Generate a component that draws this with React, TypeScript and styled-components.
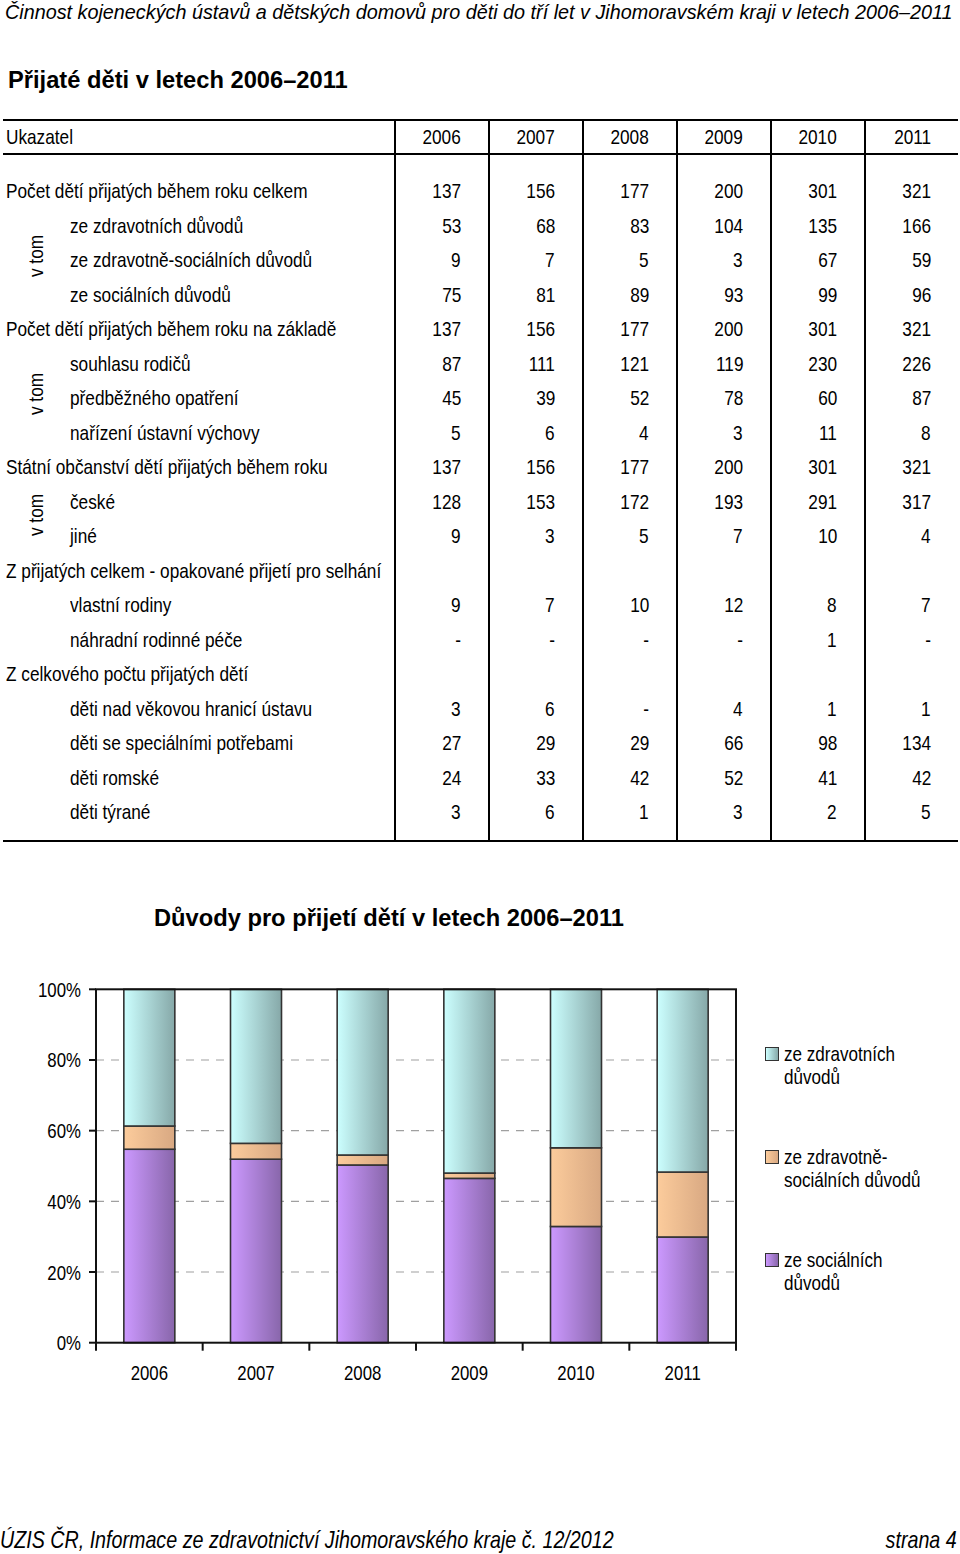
import React from "react";
import styled, { createGlobalStyle } from "styled-components";

const Global = createGlobalStyle`
  html, body { margin: 0; padding: 0; background: #fff; }
  body { width: 960px; color: #000; }
`;

const SANS = `"Liberation Sans", Arial, sans-serif`;
const SQUEEZE = 0.82;

/* Arial Narrow look: Liberation Sans (Arial metrics) condensed horizontally */
const Narrow = styled.span<{ $origin?: "left" | "right" }>`
  display: inline-block;
  white-space: nowrap;
  transform: scaleX(${SQUEEZE});
  transform-origin: ${(p) => p.$origin ?? "left"} center;
`;

const Page = styled.div`
  width: 960px;
  height: 1554px;
  display: flex;
  flex-direction: column;
  overflow: hidden;
`;

const RunningHead = styled.div`
  font-family: ${SANS};
  font-style: italic;
  font-size: 19.8px;
  line-height: 24px;
  padding-left: 5px;
  white-space: nowrap;
`;

const Title = styled.h1`
  margin: 42px 0 0 8px;
  font-family: ${SANS};
  font-weight: bold;
  font-size: 23.7px;
  line-height: 28px;
`;

const Table = styled.div`
  margin: 25px 0 0 3px;
  width: 955px;
  display: grid;
  grid-template-columns: 391px repeat(6, 94px);
  grid-template-rows: 2px 32px 2px 19px repeat(19, 34.5px) 10px 2px;
  font-family: ${SANS};
  font-size: 21px;
  line-height: 24px;
`;

const HRule = styled.div<{ $r: number }>`
  grid-column: 1 / -1;
  grid-row: ${(p) => p.$r};
  background: #000;
`;

const VRule = styled.div<{ $c: number }>`
  grid-column: ${(p) => p.$c};
  grid-row: 1 / -1;
  border-left: 2px solid #000;
`;

const LabelCell = styled.div<{ $r: number; $sub?: boolean }>`
  grid-column: 1;
  grid-row: ${(p) => p.$r};
  display: flex;
  align-items: center;
  padding-left: ${(p) => (p.$sub ? 67 : 3)}px;
  white-space: nowrap;
`;

const NumCell = styled.div<{ $r: number; $c: number }>`
  grid-column: ${(p) => p.$c};
  grid-row: ${(p) => p.$r};
  display: flex;
  align-items: center;
  justify-content: flex-end;
  padding-right: 27px;
`;

const VTom = styled.div<{ $r: string }>`
  grid-column: 1;
  grid-row: ${(p) => p.$r};
  align-self: center;
  justify-self: start;
  margin-left: 7px;
  white-space: nowrap;
  transform: translateY(-4px) rotate(-90deg) scaleX(${SQUEEZE});
`;

const ChartSection = styled.section`
  margin-top: 62px;
  display: flex;
  flex-direction: column;
`;

const ChartTitle = styled.h2`
  margin: 0;
  width: 778px;
  text-align: center;
  font-family: ${SANS};
  font-weight: bold;
  font-size: 23.7px;
  line-height: 28px;
`;

const ChartRow = styled.div`
  margin-top: 43px;
  display: flex;
  align-items: flex-start;
`;

const Legend = styled.ul`
  list-style: none;
  margin: 67px 0 0 15px;
  padding: 0;
  display: flex;
  flex-direction: column;
  gap: 57px;
  font-family: ${SANS};
  font-size: 20.8px;
  line-height: 23px;
`;

const LegendItem = styled.li`
  display: flex;
  gap: 5px;
  align-items: flex-start;
`;

const Swatch = styled.span<{ $from: string; $to: string }>`
  flex: none;
  width: 14px;
  height: 14px;
  margin-top: 5px;
  box-sizing: border-box;
  border: 1.5px solid #333;
  background: linear-gradient(to right, ${(p) => p.$from}, ${(p) => p.$to});
`;

const Footer = styled.footer`
  margin-top: auto;
  display: flex;
  justify-content: space-between;
  padding: 0 3px 1px 0;
  font-family: ${SANS};
  font-style: italic;
  font-size: 24px;
  line-height: 26px;
`;

type Val = number | string;
interface Row {
  label: string;
  sub?: boolean;
  v: Val[];
}

const rows: Row[] = [
  { label: "Počet dětí přijatých během roku celkem", v: [137, 156, 177, 200, 301, 321] },
  { label: "ze zdravotních důvodů", sub: true, v: [53, 68, 83, 104, 135, 166] },
  { label: "ze zdravotně-sociálních důvodů", sub: true, v: [9, 7, 5, 3, 67, 59] },
  { label: "ze sociálních důvodů", sub: true, v: [75, 81, 89, 93, 99, 96] },
  { label: "Počet dětí přijatých během roku na základě", v: [137, 156, 177, 200, 301, 321] },
  { label: "souhlasu rodičů", sub: true, v: [87, 111, 121, 119, 230, 226] },
  { label: "předběžného opatření", sub: true, v: [45, 39, 52, 78, 60, 87] },
  { label: "nařízení ústavní výchovy", sub: true, v: [5, 6, 4, 3, 11, 8] },
  { label: "Státní občanství dětí přijatých během roku", v: [137, 156, 177, 200, 301, 321] },
  { label: "české", sub: true, v: [128, 153, 172, 193, 291, 317] },
  { label: "jiné", sub: true, v: [9, 3, 5, 7, 10, 4] },
  { label: "Z přijatých celkem - opakované přijetí pro selhání", v: [] },
  { label: "vlastní rodiny", sub: true, v: [9, 7, 10, 12, 8, 7] },
  { label: "náhradní rodinné péče", sub: true, v: ["-", "-", "-", "-", 1, "-"] },
  { label: "Z celkového počtu přijatých dětí", v: [] },
  { label: "děti nad věkovou hranicí ústavu", sub: true, v: [3, 6, "-", 4, 1, 1] },
  { label: "děti se speciálními potřebami", sub: true, v: [27, 29, 29, 66, 98, 134] },
  { label: "děti romské", sub: true, v: [24, 33, 42, 52, 41, 42] },
  { label: "děti týrané", sub: true, v: [3, 6, 1, 3, 2, 5] },
];

const years = [2006, 2007, 2008, 2009, 2010, 2011];
const FIRST = 5;
const vTomGroups = [
  [1, 4],
  [5, 8],
  [9, 11],
];

const DataTable = () => (
  <Table>
    {[2, 3, 4, 5, 6, 7].map((c) => (
      <VRule key={`v${c}`} $c={c} />
    ))}
    <LabelCell $r={2}>
      <Narrow>Ukazatel</Narrow>
    </LabelCell>
    {years.map((y, i) => (
      <NumCell key={y} $r={2} $c={i + 2}>
        <Narrow $origin="right">{y}</Narrow>
      </NumCell>
    ))}
    {rows.map((row, ri) => (
      <React.Fragment key={ri}>
        <LabelCell $r={FIRST + ri} $sub={row.sub}>
          <Narrow>{row.label}</Narrow>
        </LabelCell>
        {row.v.map((val, ci) => (
          <NumCell key={ci} $r={FIRST + ri} $c={ci + 2}>
            <Narrow $origin="right">{val}</Narrow>
          </NumCell>
        ))}
      </React.Fragment>
    ))}
    {vTomGroups.map(([a, b]) => (
      <VTom key={a} $r={`${FIRST + a} / ${FIRST + b}`}>
        v tom
      </VTom>
    ))}
    <HRule $r={1} />
    <HRule $r={3} />
    <HRule $r={25} />
  </Table>
);

const series = [
  { key: "soc", from: "#cc99ff", to: "#8866aa", data: [75, 81, 89, 93, 99, 96] },
  { key: "zs", from: "#fccc9c", to: "#d8a882", data: [9, 7, 5, 3, 67, 59] },
  { key: "zdr", from: "#ccffff", to: "#86a8a8", data: [53, 68, 83, 104, 135, 166] },
];

const X0 = 96;
const X1 = 736;
const Y0 = 989.3;
const Y1 = 1342.7;
const CW = (X1 - X0) / 6;
const BW = 51;
const yAt = (p: number) => Y1 - p * (Y1 - Y0);

const NarrowText = ({ x, y, anchor, children }: { x: number; y: number; anchor: "start" | "middle" | "end"; children: React.ReactNode }) => (
  <text transform={`translate(${x} ${y}) scale(${SQUEEZE} 1)`} textAnchor={anchor}>
    {children}
  </text>
);

const Chart = () => (
  <svg width={750} height={420} viewBox="0 975 750 420" fontFamily={SANS} fontSize={20.5} style={{ flex: "none" }}>
    <defs>
      {series.map((s) => (
        <linearGradient key={s.key} id={`g-${s.key}`} x1="0" x2="1" y1="0" y2="0">
          <stop offset="0" stopColor={s.from} />
          <stop offset="1" stopColor={s.to} />
        </linearGradient>
      ))}
    </defs>
    {[0.2, 0.4, 0.6, 0.8].map((p) => (
      <line key={p} x1={X0} x2={X1} y1={yAt(p)} y2={yAt(p)} stroke="#a0a0a0" strokeWidth={1.2} strokeDasharray="8 7" />
    ))}
    {years.map((y, i) => {
      const total = series.reduce((a, s) => a + s.data[i], 0);
      const x = X0 + CW * (i + 0.5) - BW / 2;
      let acc = 0;
      return (
        <g key={y}>
          {series.map((s) => {
            const lo = acc / total;
            acc += s.data[i];
            const hi = acc / total;
            return (
              <rect
                key={s.key}
                x={x}
                y={yAt(hi)}
                width={BW}
                height={yAt(lo) - yAt(hi)}
                fill={`url(#g-${s.key})`}
                stroke="#333"
                strokeWidth={1.6}
              />
            );
          })}
        </g>
      );
    })}
    <rect x={X0} y={Y0} width={X1 - X0} height={Y1 - Y0} fill="none" stroke="#111" strokeWidth={2} />
    {[0, 0.2, 0.4, 0.6, 0.8, 1].map((p) => (
      <g key={p}>
        <line x1={89} x2={X0} y1={yAt(p)} y2={yAt(p)} stroke="#111" strokeWidth={2} />
        <NarrowText x={81} y={yAt(p) + 7.5} anchor="end">
          {Math.round(p * 100)}%
        </NarrowText>
      </g>
    ))}
    {[0, 1, 2, 3, 4, 5, 6].map((i) => (
      <line key={i} x1={X0 + CW * i} x2={X0 + CW * i} y1={Y1} y2={Y1 + 8} stroke="#111" strokeWidth={2} />
    ))}
    {years.map((y, i) => (
      <NarrowText key={y} x={X0 + CW * (i + 0.5)} y={1379.5} anchor="middle">
        {y}
      </NarrowText>
    ))}
  </svg>
);

const legendItems = [
  { from: "#ccffff", to: "#86a8a8", lines: ["ze zdravotních", "důvodů"] },
  { from: "#fccc9c", to: "#d8a882", lines: ["ze zdravotně-", "sociálních důvodů"] },
  { from: "#cc99ff", to: "#8866aa", lines: ["ze sociálních", "důvodů"] },
];

export default function App() {
  return (
    <Page>
      <Global />
      <RunningHead>
        Činnost kojeneckých ústavů a dětských domovů pro děti do tří let v Jihomoravském kraji v letech 2006–2011
      </RunningHead>
      <Title>Přijaté děti v letech 2006–2011</Title>
      <DataTable />
      <ChartSection>
        <ChartTitle>Důvody pro přijetí dětí v letech 2006–2011</ChartTitle>
        <ChartRow>
          <Chart />
          <Legend>
            {legendItems.map((it) => (
              <LegendItem key={it.lines[0]}>
                <Swatch $from={it.from} $to={it.to} />
                <Narrow>
                  {it.lines[0]}
                  <br />
                  {it.lines[1]}
                </Narrow>
              </LegendItem>
            ))}
          </Legend>
        </ChartRow>
      </ChartSection>
      <Footer>
        <Narrow>ÚZIS ČR, Informace ze zdravotnictví Jihomoravského kraje č. 12/2012</Narrow>
        <Narrow $origin="right">strana 4</Narrow>
      </Footer>
    </Page>
  );
}
